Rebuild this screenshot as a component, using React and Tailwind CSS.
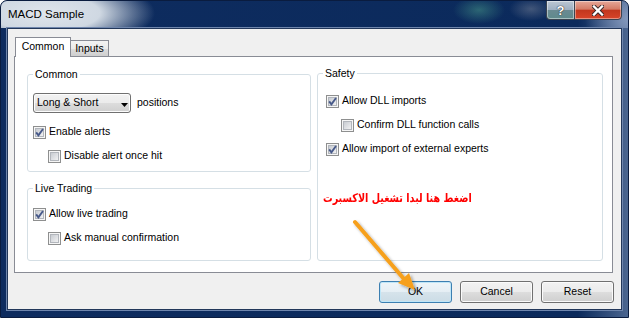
import React from "react";

function CheckBox({ checked }) {
  return (
    <svg width="13" height="13" viewBox="0 0 13 13" className="shrink-0">
      <defs>
        <linearGradient id="cbg" x1="0" y1="0" x2="1" y2="1">
          <stop offset="0" stopColor="#c5c9cf" />
          <stop offset="1" stopColor="#f4f4f5" />
        </linearGradient>
      </defs>
      <rect x="0.5" y="0.5" width="12" height="12" fill="#f6f6f6" stroke="#8e8f8f" />
      <rect x="2.5" y="2.5" width="8" height="8" fill="url(#cbg)" stroke="#b2b6bc" />
      {checked && (
        <path d="M3.2 6.4 L5.4 9.3 L10 3" fill="none" stroke="#485a8a" strokeWidth="1.9" />
      )}
    </svg>
  );
}

function CheckRow({ checked, label, indent }) {
  return (
    <div className={indent ? "flex h-[24px] items-center gap-[3px] pl-[15px]" : "flex h-[24px] items-center gap-[3px]"}>
      <CheckBox checked={checked} />
      <span className="whitespace-nowrap">{label}</span>
    </div>
  );
}

function Group({ title, className, children }) {
  return (
    <fieldset className={"rounded-[3px] border border-[#d5dfe5] px-[5px] " + className}>
      <legend className="px-[2px] leading-[13px]">{title}</legend>
      {children}
    </fieldset>
  );
}

function Button({ label, primary }) {
  return (
    <div
      className={
        primary
          ? "flex h-[22px] w-[73px] items-center justify-center rounded-[3px] border border-[#3c7fb1] bg-[linear-gradient(#eef5f9,#e5eef4_50%,#d6e3eb_50%,#cbdce6)] shadow-[inset_0_0_0_1px_#bfe6f8]"
          : "flex h-[22px] w-[73px] items-center justify-center rounded-[3px] border border-[#707070] bg-[linear-gradient(#f2f2f2,#ebebeb_50%,#dddddd_50%,#cfcfcf)] shadow-[inset_0_0_0_1px_#fbfbfb]"
      }
    >
      {label}
    </div>
  );
}

export default function App() {
  return (
    <div className="relative flex h-[318px] w-[629px] flex-col overflow-hidden rounded-t-[7px] border border-[#0a1c3f] bg-[linear-gradient(90deg,#0e2c5f,#0b2a5c_92%,#4b6690)] font-['Liberation_Sans',Arial,sans-serif] text-[10.5px] text-black">
      {/* title bar */}
      <div className="flex h-[27px] shrink-0 items-start bg-[image:radial-gradient(ellipse_110px_36px_at_44px_12px,#dfe5ec_0%,#cfd8e2_50%,rgba(14,44,95,0)_100%),radial-gradient(ellipse_26px_14px_at_478px_9px,rgba(70,150,135,0.55),rgba(0,0,0,0)),radial-gradient(ellipse_22px_12px_at_530px_8px,rgba(120,130,150,0.5),rgba(0,0,0,0)),radial-gradient(ellipse_45px_35px_at_629px_18px,rgba(140,160,195,0.9),rgba(0,0,0,0))]">
        <div className="pl-[7px] pt-[6px] text-[11.5px] leading-[14px] text-black">MACD Sample</div>
        <div className="flex-1" />
        <div className="mr-[6px] flex -mt-px">
          <div className="flex h-[20px] w-[28px] items-center justify-center rounded-bl-[4px] border border-r-0 border-[#3a4350] bg-[linear-gradient(#bcc6d3,#9fb0c2_48%,#6a8a92_52%,#5e8a8c)] shadow-[inset_0_0_0_1px_rgba(255,255,255,0.45)]">
            <span className="text-[13px] font-bold leading-none text-white [text-shadow:0_0_1px_#222,0_0_1px_#222]">?</span>
          </div>
          <div className="flex h-[20px] w-[48px] items-center justify-center rounded-br-[4px] border border-[#3a4350] bg-[linear-gradient(#e6a899,#d57b66_45%,#c2371e_52%,#d8452a)] shadow-[inset_0_0_0_1px_rgba(255,255,255,0.4)]">
            <svg width="12" height="11" viewBox="0 0 12 11">
              <path d="M2 1.5 L10 9.5 M10 1.5 L2 9.5" stroke="#3b2a2a" strokeWidth="4.2" strokeLinecap="square" />
              <path d="M2 1.5 L10 9.5 M10 1.5 L2 9.5" stroke="#ffffff" strokeWidth="2.4" strokeLinecap="square" />
            </svg>
          </div>
        </div>
      </div>

      {/* client area */}
      <div className="mx-[6px] mb-[7px] flex flex-1 flex-col border border-[#22375a] bg-[#f0f0f0] shadow-[0_0_0_1px_#6f86ad]">
        <div className="flex flex-col pl-[6px] pr-[8px] pt-[8px]">
          {/* tabs */}
          <div className="flex h-[19px] items-end pl-[1px]">
            <div className="relative z-10 -mb-px flex h-[20px] w-[56px] items-center justify-center border border-b-0 border-[#898c95] bg-white pb-[1px]">
              Common
            </div>
            <div className="flex h-[16px] w-[38px] items-center justify-center border border-b-0 border-l-0 border-[#898c95] bg-[linear-gradient(#f3f3f3,#ebebeb_50%,#dddddd_50%,#cfcfcf)]">
              Inputs
            </div>
          </div>
          {/* panel */}
          <div className="flex h-[217px] gap-[6px] border border-[#898c95] bg-white pl-[12px] pt-[11px]">
            <div className="flex w-[284px] flex-col gap-[10px]">
              <Group title="Common" className="h-[104px]">
                <div className="flex flex-col pt-[12px]">
                  <div className="flex items-center">
                    <div className="flex h-[20px] w-[98px] items-center justify-between rounded-[3px] border border-[#707070] bg-[linear-gradient(#f2f2f2,#ebebeb_50%,#dddddd_50%,#cfcfcf)] pl-[3px] pr-[2px] shadow-[inset_0_0_0_1px_#fcfcfc]">
                      <span>Long &amp; Short</span>
                      <svg width="7" height="4" viewBox="0 0 7 4" className="mt-[3px]">
                        <path d="M0 0 H7 L3.5 4 Z" fill="#000" />
                      </svg>
                    </div>
                    <span className="ml-[6px]">positions</span>
                  </div>
                  <div className="mt-[7px]">
                    <CheckRow checked label="Enable alerts" />
                    <CheckRow indent label="Disable alert once hit" />
                  </div>
                </div>
              </Group>
              <Group title="Live Trading" className="h-[79px]">
                <div className="pt-[7px]">
                  <CheckRow checked label="Allow live trading" />
                  <CheckRow indent label="Ask manual confirmation" />
                </div>
              </Group>
            </div>
            <Group title="Safety" className="-mt-px h-[194px] w-[286px]">
              <div className="pl-[3px] pt-[9px]">
                <CheckRow checked label="Allow DLL imports" />
                <CheckRow indent label="Confirm DLL function calls" />
                <CheckRow checked label="Allow import of external experts" />
              </div>
            </Group>
          </div>
        </div>
        {/* buttons */}
        <div className="mt-[8px] flex justify-end gap-[8px] pr-[7px]">
          <Button primary label="OK" />
          <Button label="Cancel" />
          <Button label="Reset" />
        </div>
      </div>

      {/* annotation overlay */}
      <div
        dir="rtl"
        className="absolute left-[322px] top-[188px] origin-left scale-x-[0.8] whitespace-nowrap font-['DejaVu_Sans',sans-serif] text-[12px] font-bold leading-[18px] text-[#ff0000]"
      >
        اضغط هنا لبدا تشغيل الاكسبرت
      </div>
      <svg className="pointer-events-none absolute left-0 top-0" width="629" height="318" viewBox="0 0 629 318">
        <defs>
          <filter id="sh" x="-20%" y="-20%" width="140%" height="140%">
            <feDropShadow dx="2" dy="2" stdDeviation="1.5" floodColor="#000" floodOpacity="0.35" />
          </filter>
        </defs>
        <g filter="url(#sh)">
          <line x1="354" y1="221" x2="403" y2="278" stroke="#f6a01e" strokeWidth="4" strokeLinecap="round" />
          <polygon points="414,289 397,282 408,272" fill="#f6a01e" />
        </g>
      </svg>
    </div>
  );
}
